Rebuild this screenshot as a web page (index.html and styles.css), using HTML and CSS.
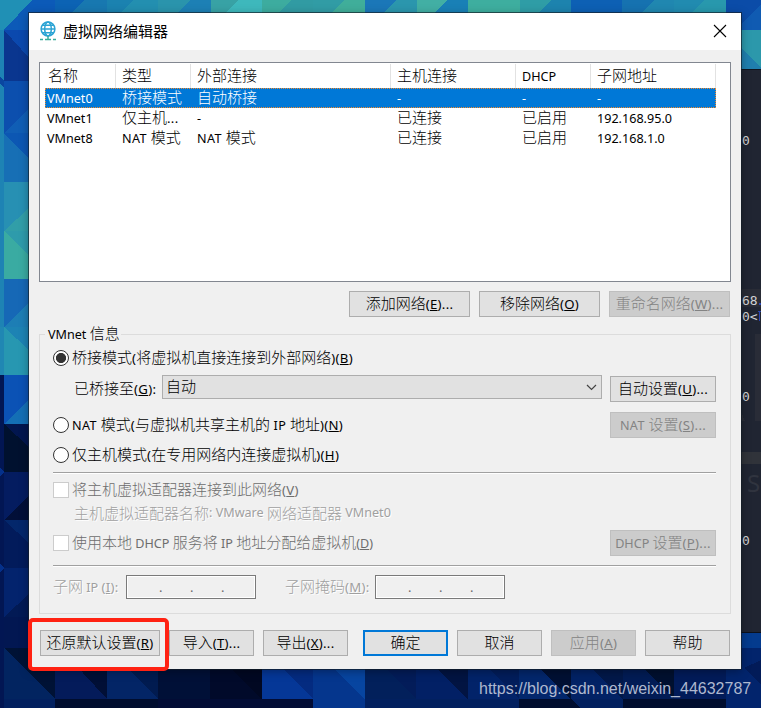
FILE: index.html
```html
<!DOCTYPE html>
<html lang="zh-CN">
<head>
<meta charset="utf-8">
<title>虚拟网络编辑器</title>
<link rel="stylesheet" href="styles.css">
</head>
<body>
<svg class="wall" width="761" height="708" viewBox="0 0 761 708" shape-rendering="crispEdges">
  <rect width="761" height="708" fill="#02205f"/>
  <!-- top strip -->
  <rect width="55" height="30" fill="#0c5ab8"/>
  <path d="M0 0H32L4 30H0z" fill="#2090b5"/>
  <rect x="55" width="52" height="13" fill="#0c63b4"/>
  <path d="M84 0H107V13H72z" fill="#1878b0"/>
  <rect x="107" width="51" height="13" fill="#1b82b0"/>
  <path d="M133 0H158V13H120z" fill="#238fb0"/>
  <rect x="158" width="53" height="13" fill="#2a94ac"/>
  <path d="M190 0H211V13H178z" fill="#1d80b5"/>
  <rect x="211" width="51" height="13" fill="#38a2a5"/>
  <path d="M238 0H262V13H226z" fill="#3eb8bc"/>
  <rect x="262" width="51" height="13" fill="#3dac9f"/>
  <path d="M291 0H313V13H278z" fill="#319ba3"/>
  <rect x="313" width="52" height="13" fill="#319ca5"/>
  <path d="M344 0H365V13H331z" fill="#40ae9a"/>
  <rect x="365" width="52" height="13" fill="#1b77b8"/>
  <path d="M396 0H417V13H383z" fill="#2b96ad"/>
  <rect x="417" width="51" height="13" fill="#42afa4"/>
  <path d="M448 0H468V13H434z" fill="#1980b6"/>
  <rect x="468" width="52" height="13" fill="#3eae9f"/>
  <rect x="520" width="51" height="13" fill="#2f9da6"/>
  <path d="M552 0H571V13H538z" fill="#1d83ae"/>
  <rect x="571" width="51" height="13" fill="#0d60b4"/>
  <rect x="622" width="52" height="13" fill="#1672b0"/>
  <path d="M655 0H674V13H641z" fill="#2087b0"/>
  <rect x="674" width="52" height="13" fill="#218bb0"/>
  <path d="M704 0H726V13H691z" fill="#2898ad"/>
  <rect x="726" width="35" height="30" fill="#0b4ca8"/>
  <path d="M761 4V30H735z" fill="#105bb2"/>
  <rect x="741" y="30" width="20" height="40" fill="#2c98ab"/>
  <path d="M741 48L761 68V70H741z" fill="#207fae"/>
  <!-- left strip -->
  <rect y="30" width="4" height="297" fill="#1e83b4"/>
  <path d="M0 76L4 81V88L0 84z" fill="#0a46a0"/>
  <rect x="4" y="30" width="25" height="51" fill="#0a368f"/>
  <path d="M4 30L29 58V30z" fill="#0b49ae"/>
  <rect x="4" y="81" width="25" height="52" fill="#0c4fae"/>
  <path d="M29 108L4 133H29z" fill="#105eb5"/>
  <rect x="4" y="133" width="25" height="49" fill="#176fb5"/>
  <path d="M4 133L29 159V133z" fill="#0c57b3"/>
  <rect x="4" y="182" width="25" height="49" fill="#2790b3"/>
  <path d="M29 208L4 231H29z" fill="#319ea8"/>
  <rect x="4" y="231" width="25" height="48" fill="#3aaba2"/>
  <path d="M4 231L29 256V231z" fill="#2e9bab"/>
  <rect x="4" y="279" width="25" height="48" fill="#1668b6"/>
  <path d="M29 302L4 327H29z" fill="#1d7eb5"/>
  <rect x="4" y="327" width="25" height="48" fill="#2797b1"/>
  <path d="M4 327L29 350V327z" fill="#1d83b4"/>
  <rect y="375" width="4" height="333" fill="#021653"/>
  <rect y="327" width="4" height="48" fill="#2087b3"/>
  <rect x="4" y="375" width="25" height="49" fill="#0b52b5"/>
  <path d="M29 400L4 424H29z" fill="#146fb5"/>
  <rect x="4" y="424" width="25" height="48" fill="#00112f"/>
  <path d="M4 424L29 447V424z" fill="#02164f"/>
  <rect x="4" y="472" width="25" height="48" fill="#041c60"/>
  <path d="M29 496L4 520H29z" fill="#020f38"/>
  <rect x="4" y="520" width="25" height="48" fill="#021b5b"/>
  <path d="M4 520L29 543V520z" fill="#03276b"/>
  <rect x="4" y="568" width="25" height="49" fill="#03236d"/>
  <path d="M29 594L4 617H29z" fill="#021a55"/>
  <path d="M0 467L4 472L0 477zM0 564L4 568L0 573z" fill="#04308a"/>
  <path d="M4 617H29V648H4z" fill="#021752"/>
  <!-- bottom strip -->
  <rect x="4" y="648" width="51" height="51" fill="#022460"/>
  <path d="M4 648H55V699z" fill="#001235"/>
  <rect x="55" y="648" width="52" height="51" fill="#041b5a"/>
  <path d="M60 648H107V699z" fill="#010f36"/>
  <rect x="107" y="648" width="51" height="51" fill="#032566"/>
  <path d="M107 648H158V699z" fill="#011b50"/>
  <rect x="158" y="648" width="52" height="51" fill="#001037"/>
  <rect x="210" y="648" width="52" height="51" fill="#010a2a"/>
  <path d="M210 648H262V699z" fill="#010822"/>
  <rect x="262" y="648" width="51" height="51" fill="#053797"/>
  <path d="M262 648H313V699z" fill="#042b80"/>
  <rect x="313" y="648" width="52" height="60" fill="#0745a0"/>
  <path d="M313 648V708H365V699z" fill="#05368d"/>
  <rect x="365" y="648" width="51" height="51" fill="#02205b"/>
  <path d="M365 648H416V699z" fill="#031c59"/>
  <rect x="416" y="648" width="52" height="51" fill="#022065"/>
  <path d="M427 659H468V699z" fill="#021442"/>
  <rect x="468" y="648" width="51" height="51" fill="#022369"/>
  <path d="M468 648H519V699z" fill="#021d5b"/>
  <rect x="519" y="648" width="52" height="51" fill="#03276c"/>
  <path d="M519 648H571V699z" fill="#001033"/>
  <rect x="571" y="648" width="52" height="51" fill="#022265"/>
  <path d="M571 648H623V699z" fill="#021849"/>
  <rect x="623" y="648" width="51" height="51" fill="#021c55"/>
  <path d="M623 648H674V699z" fill="#00102f"/>
  <rect x="674" y="648" width="52" height="51" fill="#021b59"/>
  <path d="M55 699H158V708H55zM519 699H571L580 708H519zM623 699H726V708H623z" fill="#000d2e"/>
  <path d="M158 699H313V708H158z" fill="#020c35"/>
  <rect x="726" y="633" width="35" height="75" fill="#02246c"/>
  <rect x="741" y="633" width="20" height="15" fill="#043b8e"/>
  <path d="M744 668L761 660V685z" fill="#021b58"/>
  <!-- terminal behind the dialog -->
  <rect x="741" y="69" width="20" height="564" fill="#202532"/>
  <rect x="741" y="69" width="20" height="1" fill="#10151e"/>
  <rect x="741" y="289" width="20" height="18" fill="#292c36"/>
  <rect x="755" y="334" width="6" height="87" fill="#292c37"/>
  <path d="M741 412L745 421H741z" fill="#292c37"/>
  <rect x="741" y="452" width="20" height="12" fill="#30333a"/>
  <rect x="741" y="632" width="20" height="1" fill="#0c111c"/>
  <g class="term">
    <text x="742" y="145">0</text>
    <text x="742" y="305">68</text>
    <text x="742" y="321">0&lt;</text>
    <text x="742" y="401">0</text>
    <text x="742" y="545">0</text>
  </g>
  <text class="ghost" x="747" y="492">S</text>
  <path d="M758 311h3v1h-1v9h-1v-9h-1zM759 303h2v2h-2z" fill="#2c46b0"/>
</svg>

<main class="window">
  <header class="titlebar">
    <svg class="globe" width="18" height="20" viewBox="0 0 18 20" fill="none" stroke="#2ba3d4" stroke-width="1.5">
      <circle cx="9" cy="8" r="6.9"/>
      <ellipse cx="9" cy="8" rx="3.3" ry="6.9"/>
      <path d="M2 8H16M3.5 4.2H14.5M3.5 11.8H14.5"/>
      <path d="M9 15V18" stroke="#39ad9c"/>
      <path d="M1 18.4H4M6 18.4H12M14 18.4H17" stroke="#39ad9c"/>
    </svg>
    <h1>虚拟网络编辑器</h1>
    <svg class="close" width="14" height="14" viewBox="0 0 14 14" stroke="#000" stroke-width="1.1"><path d="M1 1L13 13M13 1L1 13"/></svg>
  </header>

  <section class="list">
    <div class="row head"><span>名称</span><span>类型</span><span>外部连接</span><span>主机连接</span><span><i>DHCP</i></span><span>子网地址</span></div>
    <div class="row selected"><span><i>VMnet0</i></span><span>桥接模式</span><span>自动桥接</span><span><i>-</i></span><span><i>-</i></span><span><i>-</i></span></div>
    <div class="row"><span><i>VMnet1</i></span><span>仅主机<i class="key">...</i></span><span><i>-</i></span><span>已连接</span><span>已启用</span><span><i>192.168.95.0</i></span></div>
    <div class="row"><span><i>VMnet8</i></span><span><i class="nt">NAT </i>模式</span><span><i class="nt">NAT </i>模式</span><span>已连接</span><span>已启用</span><span><i>192.168.1.0</i></span></div>
  </section>

  <div class="actions">
    <button>添加网络<i class="key">(<u>E</u>)...</i></button>
    <button>移除网络<i class="key">(<u>O</u>)</i></button>
    <button disabled>重命名网络<i class="key">(<u>W</u>)...</i></button>
  </div>

  <section class="group">
    <h2><i>VMnet </i>信息</h2>
    <div class="line first"><span class="radio on"></span><label>桥接模式<i class="key">(</i>将虚拟机直接连接到外部网络<i class="key">)(<u>B</u>)</i></label></div>
    <div class="line bridge">
      <label>已桥接至<i class="key">(<u>G</u>):</i></label>
      <div class="combo"><span>自动</span><svg width="11" height="7" viewBox="0 0 11 7" fill="none" stroke="#444" stroke-width="1.2"><path d="M1 1L5.5 5.5L10 1"/></svg></div>
      <button>自动设置<i class="key">(<u>U</u>)...</i></button>
    </div>
    <div class="line nat"><span class="radio"></span><label><i class="nt">NAT </i>模式<i class="key">(</i>与虚拟机共享主机的<i class="nt"> IP </i>地址<i class="key">)(<u>N</u>)</i></label><button disabled><i class="nt">NAT </i>设置<i class="key">(<u>S</u>)...</i></button></div>
    <div class="line host"><span class="radio"></span><label>仅主机模式<i class="key">(</i>在专用网络内连接虚拟机<i class="key">)(<u>H</u>)</i></label></div>
    <hr>
    <div class="line adapter"><span class="check"></span><label>将主机虚拟适配器连接到此网络<i class="key">(<u>V</u>)</i></label></div>
    <div class="line name">主机虚拟适配器名称<i>: VMware </i>网络适配器<i> VMnet0</i></div>
    <div class="line dhcp"><span class="check"></span><label>使用本地<i> DHCP </i>服务将<i> IP </i>地址分配给虚拟机<i>(<u>D</u>)</i></label><button disabled><i>DHCP </i>设置<i class="key">(<u>P</u>)...</i></button></div>
    <hr>
    <div class="line subnet">
      <label class="ip">子网<i> IP </i><i class="key">(<u>I</u>):</i></label><div class="field"><b>.</b><b>.</b><b>.</b></div>
      <label class="mask">子网掩码<i class="key">(<u>M</u>):</i></label><div class="field"><b>.</b><b>.</b><b>.</b></div>
    </div>
  </section>

  <footer class="buttons">
    <button class="restore">还原默认设置<i class="key">(<u>R</u>)</i></button>
    <button>导入<i class="key">(<u>T</u>)...</i></button>
    <button>导出<i class="key">(<u>X</u>)...</i></button>
    <button class="default">确定</button>
    <button>取消</button>
    <button disabled>应用<i class="key">(<u>A</u>)</i></button>
    <button>帮助</button>
  </footer>
</main>
<div class="marker"></div>
<div class="watermark">https://blog.csdn.net/weixin_44632787</div>
</body>
</html>
```
FILE: styles.css
```css
* { box-sizing: border-box; }
body {
  margin: 0;
  width: 761px;
  height: 708px;
  position: relative;
  overflow: hidden;
  padding: 13px 0 0 29px;
  font: 300 15px/20px "Noto Sans CJK SC", sans-serif;
  color: #000;
}
i {
  font-family: "Noto Sans", sans-serif;
  font-size: 12.6px;
  font-weight: 400;
  font-style: normal;
  line-height: 1;
  white-space: pre;
}
.key { font-size: 13.2px; letter-spacing: .3px; }
.nt { letter-spacing: .4px; }
u { text-underline-offset: 1px; text-decoration-thickness: 1px; text-decoration-skip-ink: none; }
.wall { position: absolute; left: 0; top: 0; }
.term { font: 13px "DejaVu Sans Mono", monospace; fill: #d0d2d4; }
.ghost { font: 24px "Noto Sans", sans-serif; fill: #30343f; }
.window {
  position: relative;
  width: 712px;
  height: 656px;
  background: #f0f0f0;
  box-shadow: 0 0 0 1px rgba(20, 30, 40, .65), 0 2px 9px rgba(0, 0, 0, .35);
}
.titlebar { height: 37px; background: #fff; display: flex; align-items: center; padding: 0 14px 0 10px; }
.globe { margin-bottom: 2px; }
h1 { margin: 0 auto 2px 6px; font-size: 15px; font-weight: 400; }
.close { margin-bottom: 1px; }
.list { margin: 12px 10px 0; height: 220px; border: 1px solid #828790; background: #fff; padding: 1px 0 0 5px; }
.row { display: grid; grid-template-columns: 71px 75px 200px 125px 75px 125px; width: 671px; height: 20px; line-height: 18px; }
.row span { padding-left: 6px; white-space: nowrap; }
.row span:first-child { padding-left: 2px; }
.row.head { height: 24px; line-height: 21px; }
.row.head span { border-right: 1px solid #e2e2e2; }
.row.head span:first-child { padding-left: 3px; }
.selected { background: #0078d7; color: #fff; outline: 1px dotted #f28a2d; outline-offset: -1px; }
button {
  width: 106px;
  height: 26px;
  padding: 0 0 2px;
  border: 1px solid #adadad;
  border-radius: 0;
  background: #e1e1e1;
  color: #000;
  font: 300 15px/20px "Noto Sans CJK SC", sans-serif;
  white-space: nowrap;
}
button:disabled { background: #ccc; border-color: #bfbfbf; color: #838383; }
.actions { display: flex; justify-content: flex-end; gap: 9px; padding: 9px 11px 0; }
.actions button { width: 121px; }
.group { position: relative; margin: 17px 10px 0; height: 280px; border: 1px solid #dcdcdc; padding: 7px 14px 0 13px; }
h2 { position: absolute; left: 5px; top: -13px; margin: 0; padding: 0 1px 0 3px; background: #f0f0f0; font-size: 15px; font-weight: 300; line-height: 22px; }
.line { display: flex; align-items: center; white-space: nowrap; }
.line label { padding-bottom: 2px; }
.line button { margin-left: auto; }
.first { height: 32px; }
.bridge { height: 29px; align-items: flex-start; }
.bridge label { width: 109px; padding: 4px 0 0 21px; }
.combo { width: 440px; height: 24px; margin-top: 1px; border: 1px solid #adadad; background: #e1e1e1; display: flex; align-items: center; justify-content: space-between; padding: 0 4px 0 3px; }
.combo span { margin-bottom: 3px; }
.bridge button { margin-top: 2px; }
.nat { height: 44px; }
.host { height: 16px; margin-bottom: 9px; }
.adapter { height: 32px; color: #6d6d6d; }
.name { height: 14px; padding-left: 21px; color: #a0a0a0; text-shadow: 1px 1px #fff; }
.dhcp { height: 45px; padding-top: 1px; color: #6d6d6d; }
.subnet { height: 40px; color: #a0a0a0; text-shadow: 1px 1px #fff; }
.ip { width: 73px; }
.mask { width: 119px; padding-left: 29px; }
hr { margin: 0; height: 2px; border: 0; border-top: 1px solid #a0a0a0; background: #fff; }
.radio { width: 16px; height: 16px; border: 1px solid #333; border-radius: 50%; background: #fff; margin-right: 3px; flex: none; }
.radio.on { background: radial-gradient(circle, #333 4.7px, #fff 5.4px); }
.check { width: 16px; height: 16px; border: 1px solid #ccc; background: #fff; margin-right: 3px; flex: none; }
.field { width: 130px; height: 24px; border: 1px solid #7a7a7a; box-shadow: inset 0 0 0 1px #fff; display: flex; padding: 1px 0 0 32px; color: #6d6d6d; text-shadow: none; }
.field b { width: 31px; font: 13px/20px "Noto Sans", sans-serif; }
.buttons { display: flex; gap: 9px; padding: 16px 11px 0; }
.buttons button { width: 85px; }
.buttons .restore { width: 120px; }
.buttons .default { margin-left: 6px; border: 2px solid #0078d7; padding-bottom: 2px; }
.marker { position: absolute; left: 28px; top: 618px; width: 141px; height: 53px; border: 4px solid #ff2213; border-radius: 5px; }
.watermark { position: absolute; left: 479px; top: 678px; font: 16px/22px "Liberation Sans", sans-serif; color: #aeb8cf; white-space: nowrap; }
```
